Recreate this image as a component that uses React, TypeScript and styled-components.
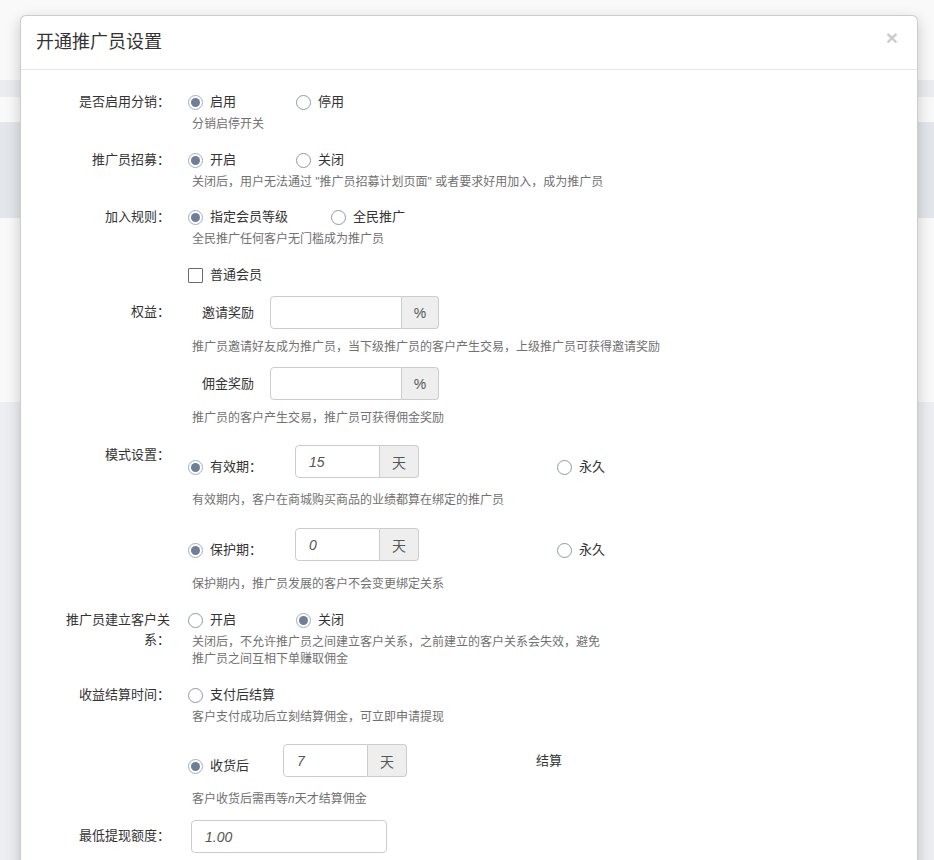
import React from 'react';
import styled, { createGlobalStyle } from 'styled-components';

const GlobalStyle = createGlobalStyle`
  html, body {
    margin: 0;
    padding: 0;
  }

  body {
    width: 934px;
    height: 860px;
    overflow: hidden;
    font-family: "Liberation Sans", "Noto Sans CJK SC", sans-serif;
    font-size: 13px;
    color: #333;
    background: #f9f9f9;
  }
`;

const Page = styled.div`
  position: relative;
  display: flex;
  flex-direction: column;
  height: 860px;
  overflow: hidden;
`;

const Band = styled.div<{ $h?: number; $bg: string }>`
  height: ${(p) => (p.$h ? `${p.$h}px` : 'auto')};
  flex: ${(p) => (p.$h ? 'none' : '1')};
  background: ${(p) => p.$bg};
`;

const Modal = styled.div`
  position: absolute;
  top: 15px;
  left: 20px;
  width: 898px;
  height: 900px;
  box-sizing: border-box;
  background: #fff;
  border: 1px solid rgba(0, 0, 0, 0.2);
  border-radius: 6px;
  box-shadow: 0 5px 15px rgba(0, 0, 0, 0.2);
`;

const Header = styled.div`
  display: flex;
  align-items: center;
  justify-content: space-between;
  padding: 14px 15px 15px;
  border-bottom: 1px solid #e5e5e5;
`;

const Title = styled.div`
  font-size: 18px;
  line-height: 24px;
  color: #333;
`;

const Close = styled.span`
  font-size: 21px;
  font-weight: bold;
  line-height: 1;
  color: #000;
  opacity: 0.2;
  margin-right: 4px;
  margin-top: -9px;
`;

const Body = styled.div`
  padding: 22px 40px 0 39px;
`;

const Field = styled.div<{ $mb?: number }>`
  display: grid;
  grid-template-columns: 110px 1fr;
  column-gap: 18px;
  margin-bottom: ${(p) => p.$mb ?? 17}px;
`;

const Label = styled.div<{ $pt?: number }>`
  text-align: right;
  line-height: 20px;
  padding-top: ${(p) => p.$pt ?? 0}px;
  color: #333;
`;

const Control = styled.div`
  display: flex;
  flex-direction: column;
  align-items: flex-start;
`;

const OptionLine = styled.div`
  display: flex;
  align-items: center;
  height: 20px;
`;

const Option = styled.label<{ $w?: number; $ml?: number; $self?: string }>`
  display: inline-flex;
  align-items: center;
  height: 20px;
  line-height: 20px;
  width: ${(p) => (p.$w ? `${p.$w}px` : 'auto')};
  margin-left: ${(p) => p.$ml ?? 0}px;
  align-self: ${(p) => p.$self ?? 'auto'};
  margin-bottom: ${(p) => (p.$self === 'flex-end' ? '1px' : '0')};
  color: #333;
  white-space: nowrap;
`;

const Radio = styled.span<{ $on?: boolean }>`
  display: flex;
  align-items: center;
  justify-content: center;
  flex-shrink: 0;
  box-sizing: border-box;
  width: 15px;
  height: 15px;
  margin-right: 7px;
  border-radius: 50%;
  border: 1px solid ${(p) => (p.$on ? '#a3adb9' : '#8d9aa9')};
  background: #fff;

  &::after {
    content: '';
    width: 9px;
    height: 9px;
    border-radius: 50%;
    background: ${(p) => (p.$on ? '#6d8098' : 'transparent')};
  }
`;

const Box = styled.span`
  flex-shrink: 0;
  box-sizing: border-box;
  width: 15px;
  height: 15px;
  margin-right: 7px;
  border: 1px solid #6a6a6a;
  border-radius: 1px;
  background: #fff;
`;

const Help = styled.div<{ $mt?: number }>`
  margin-top: ${(p) => p.$mt ?? 4}px;
  padding-left: 4px;
  font-size: 12px;
  line-height: 17px;
  color: #717171;
`;

const RewardRow = styled.div<{ $mt?: number }>`
  display: flex;
  align-items: center;
  padding-left: 14px;
  margin-top: ${(p) => p.$mt ?? 0}px;
`;

const SubLabel = styled.span`
  width: 68px;
  line-height: 33px;
  color: #333;
`;

const PeriodRow = styled.div<{ $mt?: number }>`
  display: flex;
  align-items: center;
  margin-top: ${(p) => p.$mt ?? 0}px;
`;

const Group = styled.div`
  display: flex;
  height: 33px;
`;

const Input = styled.input<{ $w: number; $single?: boolean }>`
  box-sizing: border-box;
  width: ${(p) => p.$w}px;
  height: 33px;
  margin-left: ${(p) => (p.$single ? '3px' : '0')};
  padding: 0 13px;
  border: 1px solid #ccc;
  border-radius: ${(p) => (p.$single ? '4px' : '4px 0 0 4px')};
  font-family: "Liberation Sans", "Noto Sans CJK SC", sans-serif;
  font-size: 14px;
  font-style: italic;
  color: #555;
  background: #fff;
  outline: none;
`;

const Addon = styled.span<{ $w: number }>`
  box-sizing: border-box;
  display: flex;
  align-items: center;
  justify-content: center;
  width: ${(p) => p.$w}px;
  height: 33px;
  border: 1px solid #ccc;
  border-left: none;
  border-radius: 0 4px 4px 0;
  background: #eee;
  font-size: 14px;
  color: #555;
`;

const Trail = styled.span<{ $ml: number }>`
  margin-left: ${(p) => p.$ml}px;
  line-height: 20px;
  color: #333;
`;

const Choice = ({
  text,
  on,
  w,
  ml,
  self,
}: {
  text: string;
  on?: boolean;
  w?: number;
  ml?: number;
  self?: string;
}) => (
  <Option $w={w} $ml={ml} $self={self}>
    <Radio $on={on} />
    {text}
  </Option>
);

const App = () => {
  return (
    <>
      <GlobalStyle />
      <Page>
        <Band $h={80} $bg="#f9f9f9" />
        <Band $h={17} $bg="#eaecef" />
        <Band $h={25} $bg="#f9f9f9" />
        <Band $h={96} $bg="#e3e6ea" />
        <Band $h={184} $bg="#f9f9f9" />
        <Band $bg="#eceef2" />

        <Modal>
          <Header>
            <Title>开通推广员设置</Title>
            <Close>×</Close>
          </Header>

          <Body>
            <Field>
              <Label>是否启用分销：</Label>
              <Control>
                <OptionLine>
                  <Choice text="启用" on w={108} />
                  <Choice text="停用" />
                </OptionLine>
                <Help>分销启停开关</Help>
              </Control>
            </Field>

            <Field $mb={16}>
              <Label>推广员招募：</Label>
              <Control>
                <OptionLine>
                  <Choice text="开启" on w={108} />
                  <Choice text="关闭" />
                </OptionLine>
                <Help>关闭后，用户无法通过 "推广员招募计划页面" 或者要求好用加入，成为推广员</Help>
              </Control>
            </Field>

            <Field>
              <Label>加入规则：</Label>
              <Control>
                <OptionLine>
                  <Choice text="指定会员等级" on w={143} />
                  <Choice text="全民推广" />
                </OptionLine>
                <Help>全民推广任何客户无门槛成为推广员</Help>
              </Control>
            </Field>

            <Field $mb={11}>
              <Label />
              <Control>
                <Option>
                  <Box />
                  普通会员
                </Option>
              </Control>
            </Field>

            <Field $mb={18}>
              <Label $pt={6}>权益：</Label>
              <Control>
                <RewardRow>
                  <SubLabel>邀请奖励</SubLabel>
                  <Group>
                    <Input $w={132} readOnly value="" />
                    <Addon $w={37}>%</Addon>
                  </Group>
                </RewardRow>
                <Help $mt={10}>推广员邀请好友成为推广员，当下级推广员的客户产生交易，上级推广员可获得邀请奖励</Help>
                <RewardRow $mt={11}>
                  <SubLabel>佣金奖励</SubLabel>
                  <Group>
                    <Input $w={132} readOnly value="" />
                    <Addon $w={37}>%</Addon>
                  </Group>
                </RewardRow>
                <Help $mt={10}>推广员的客户产生交易，推广员可获得佣金奖励</Help>
              </Control>
            </Field>

            <Field>
              <Label>模式设置：</Label>
              <Control>
                <PeriodRow>
                  <Choice text="有效期：" on w={107} self="flex-end" />
                  <Group>
                    <Input $w={85} readOnly value="15" />
                    <Addon $w={39}>天</Addon>
                  </Group>
                  <Choice text="永久" ml={138} self="flex-end" />
                </PeriodRow>
                <Help $mt={14}>有效期内，客户在商城购买商品的业绩都算在绑定的推广员</Help>
                <PeriodRow $mt={19}>
                  <Choice text="保护期：" on w={107} self="flex-end" />
                  <Group>
                    <Input $w={85} readOnly value="0" />
                    <Addon $w={39}>天</Addon>
                  </Group>
                  <Choice text="永久" ml={138} self="flex-end" />
                </PeriodRow>
                <Help $mt={15}>保护期内，推广员发展的客户不会变更绑定关系</Help>
              </Control>
            </Field>

            <Field>
              <Label>推广员建立客户关系：</Label>
              <Control>
                <OptionLine>
                  <Choice text="开启" w={108} />
                  <Choice text="关闭" on />
                </OptionLine>
                <Help>
                  关闭后，不允许推广员之间建立客户关系，之前建立的客户关系会失效，避免
                  <br />
                  推广员之间互相下单赚取佣金
                </Help>
              </Control>
            </Field>

            <Field $mb={12}>
              <Label>收益结算时间：</Label>
              <Control>
                <OptionLine>
                  <Choice text="支付后结算" />
                </OptionLine>
                <Help>客户支付成功后立刻结算佣金，可立即申请提现</Help>
                <PeriodRow $mt={18}>
                  <Choice text="收货后" on w={95} self="flex-end" />
                  <Group>
                    <Input $w={85} readOnly value="7" />
                    <Addon $w={39}>天</Addon>
                  </Group>
                  <Trail $ml={129}>结算</Trail>
                </PeriodRow>
                <Help $mt={14}>
                  客户收货后需再等<i>n</i>天才结算佣金
                </Help>
              </Control>
            </Field>

            <Field>
              <Label $pt={6}>最低提现额度：</Label>
              <Control>
                <Input $w={196} $single readOnly value="1.00" />
              </Control>
            </Field>
          </Body>
        </Modal>
      </Page>
    </>
  );
};

export default App;
